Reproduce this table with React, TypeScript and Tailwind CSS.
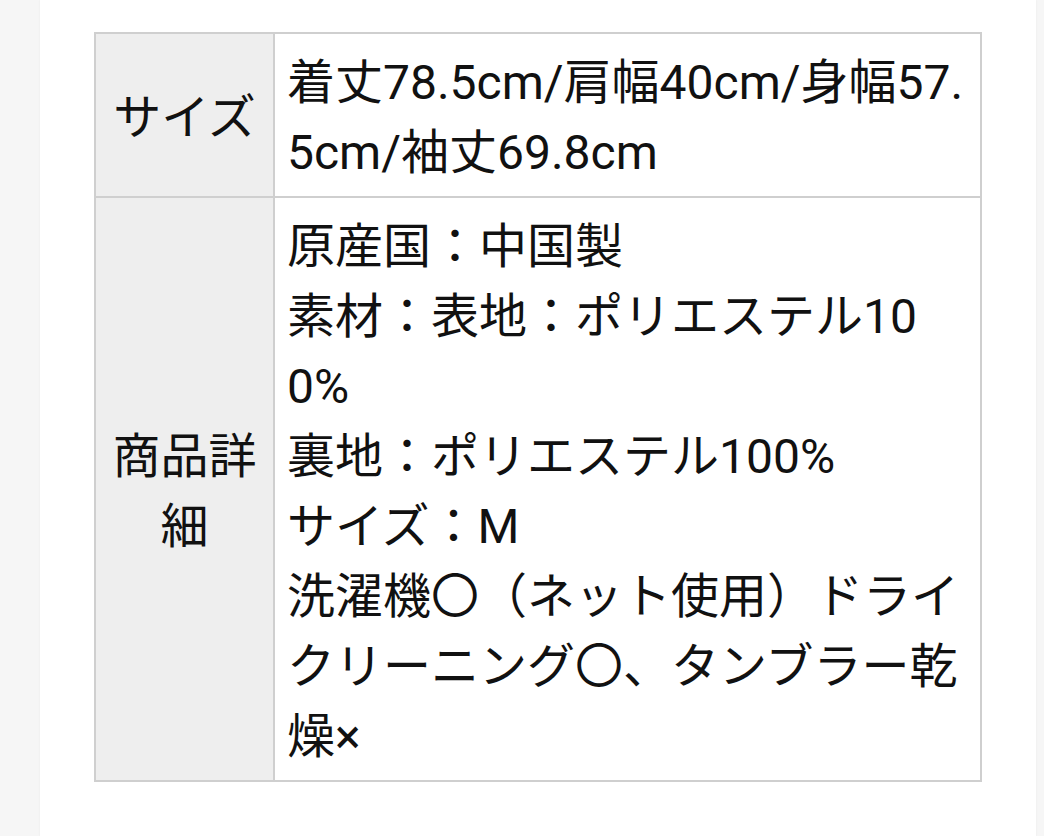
const ROWS: { label: string; lines: string[] }[] = [
  {
    label: 'サイズ',
    lines: ['着丈78.5cm/肩幅40cm/身幅57.5cm/袖丈69.8cm'],
  },
  {
    label: '商品詳細',
    lines: [
      '原産国：中国製',
      '素材：表地：ポリエステル100%',
      '裏地：ポリエステル100%',
      'サイズ：M',
      '洗濯機〇（ネット使用）ドライクリーニング〇、タンブラー乾燥×',
    ],
  },
];

export default function App() {
  return (
    <div
      className="min-h-[836px] w-[1044px] bg-[#f6f6f6] text-[#111]"
      style={{ fontFamily: 'Roboto, "Noto Sans CJK JP", sans-serif' }}
    >
      <div className="ml-[40px] mr-[8px] min-h-[836px] bg-white px-[54px] pt-[32px] shadow-[0_0_2px_rgba(0,0,0,0.06)]">
        <table className="w-full table-fixed border-collapse border-2 border-[#cfcfcf] text-[48px] leading-[70px]">
          <colgroup>
            <col className="w-[179px]" />
            <col />
          </colgroup>
          <tbody>
            {ROWS.map((row) => (
              <tr key={row.label}>
                <th className="border-2 border-[#cfcfcf] bg-[#eeeeee] px-[14px] pt-[14px] pb-[8px] text-center align-middle font-normal break-all">
                  {row.label}
                </th>
                <td className="border-2 border-[#cfcfcf] bg-white pt-[14px] pb-[8px] pl-[12px] pr-[16px] text-left align-top break-all">
                  {row.lines.map((line) => (
                    <div key={line}>{line}</div>
                  ))}
                </td>
              </tr>
            ))}
          </tbody>
        </table>
      </div>
    </div>
  );
}
